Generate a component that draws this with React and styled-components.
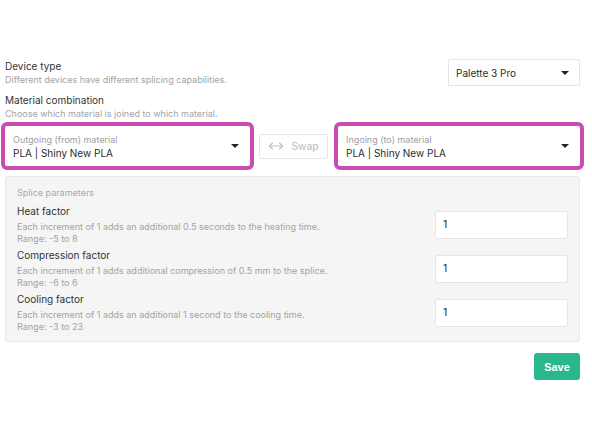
import React from "react";
import styled, { createGlobalStyle } from "styled-components";

const GlobalStyle = createGlobalStyle`
  body {
    margin: 0;
    background: #ffffff;
    font-family: Inter, "Liberation Sans", Arial, sans-serif;
    color: #2b2b2b;
  }
  * {
    box-sizing: border-box;
  }
`;

const Page = styled.div`
  width: 592px;
  height: 444px;
  padding: 59px 12px 0 5px;
  display: flex;
  flex-direction: column;
`;

const Row = styled.div`
  display: flex;
  justify-content: space-between;
  align-items: ${(props) => props.$align || "flex-start"};
`;

const Heading = styled.div`
  font-size: 10px;
  line-height: 15px;
  color: #333;
`;

const Hint = styled.div`
  font-size: 9px;
  line-height: 12px;
  color: #a3a3a3;
`;

const Section = styled.div`
  margin-top: ${(props) => props.$top || 0}px;
`;

const Select = styled.div`
  width: ${(props) => props.$width || 132}px;
  height: ${(props) => props.$height || 27}px;
  background: #fff;
  border: 1px solid ${(props) => (props.$highlight ? "#fff" : "#e4e4e4")};
  border-radius: 2px;
  padding: 0 10px 0 7px;
  display: flex;
  align-items: center;
  justify-content: space-between;
  outline: ${(props) => (props.$highlight ? "4px solid #c94db4" : "none")};
`;

const SelectValue = styled.div`
  font-size: 10px;
  color: #2b2b2b;
`;

const FieldText = styled.div`
  display: flex;
  flex-direction: column;
  gap: 2px;
`;

const FieldLabel = styled.div`
  font-size: 9px;
  line-height: 11px;
  color: #a0a0a0;
`;

const Caret = styled.span`
  width: 0;
  height: 0;
  border-left: 4px solid transparent;
  border-right: 4px solid transparent;
  border-top: 4px solid #222;
`;

const MaterialRow = styled.div`
  display: flex;
  align-items: center;
  margin-top: 6px;
`;

const SwapButton = styled.div`
  width: 69px;
  height: 25px;
  margin: 0 10px 0 9px;
  border: 1px solid #e6e6e6;
  border-radius: 2px;
  display: flex;
  align-items: center;
  justify-content: center;
  gap: 7px;
  font-size: 10.3px;
  color: #bcbcbc;
`;

const Panel = styled.div`
  margin-top: 10px;
  background: #f5f5f5;
  border: 1px solid #e9e9e9;
  border-radius: 3px;
  padding: 10px 11px 8px 11px;
  display: flex;
  flex-direction: column;
`;

const PanelTitle = styled(Hint)`
  margin-bottom: 5px;
  color: #a8a8a8;
`;

const Param = styled(Row)`
  margin-bottom: 3px;
  &:last-child {
    margin-bottom: 0;
  }
`;

const ParamText = styled.div`
  display: flex;
  flex-direction: column;
`;

const ParamTitle = styled(Heading)`
  margin-bottom: 2px;
`;

const NumberBox = styled.div`
  width: 133px;
  height: 28px;
  background: #fff;
  border: 1px solid #e6e6e6;
  border-radius: 2px;
  padding-left: 7px;
  display: flex;
  align-items: center;
  font-size: 10.5px;
  color: #2b2b2b;
`;

const Footer = styled.div`
  display: flex;
  justify-content: flex-end;
  margin-top: 11px;
`;

const SaveButton = styled.div`
  width: 46px;
  height: 27px;
  background: #29b78e;
  border-radius: 3px;
  color: #fff;
  font-family: "Liberation Sans", Arial, sans-serif;
  font-weight: 700;
  font-size: 11px;
  display: flex;
  align-items: center;
  justify-content: center;
`;

const SwapIcon = () => (
  <svg width="16" height="10" viewBox="0 0 16 10" fill="none" stroke="#bdbdbd" strokeWidth="1.1" strokeLinecap="round" strokeLinejoin="round">
    <path d="M1.5 5h13" />
    <path d="M4.5 2L1.5 5l3 3" />
    <path d="M11.5 2l3 3-3 3" />
  </svg>
);

const params = [
  {
    title: "Heat factor",
    desc: "Each increment of 1 adds an additional 0.5 seconds to the heating time.",
    range: "Range: -5 to 8",
  },
  {
    title: "Compression factor",
    desc: "Each increment of 1 adds additional compression of 0.5 mm to the splice.",
    range: "Range: -6 to 6",
  },
  {
    title: "Cooling factor",
    desc: "Each increment of 1 adds an additional 1 second to the cooling time.",
    range: "Range: -3 to 23",
  },
];

const MaterialField = ({ label, width }) => (
  <Select $highlight $width={width} $height={40}>
    <FieldText>
      <FieldLabel>{label}</FieldLabel>
      <SelectValue>PLA | Shiny New PLA</SelectValue>
    </FieldText>
    <Caret />
  </Select>
);

const App = () => (
  <Page>
    <GlobalStyle />
    <Row>
      <div>
        <Heading>Device type</Heading>
        <Hint>Different devices have different splicing capabilities.</Hint>
      </div>
      <Select>
        <SelectValue>Palette 3 Pro</SelectValue>
        <Caret />
      </Select>
    </Row>
    <Section $top={7}>
      <Heading>Material combination</Heading>
      <Hint>Choose which material is joined to which material.</Hint>
    </Section>
    <MaterialRow>
      <MaterialField label="Outgoing (from) material" width={245} />
      <SwapButton>
        <SwapIcon />
        Swap
      </SwapButton>
      <MaterialField label="Ingoing (to) material" width={242} />
    </MaterialRow>
    <Panel>
      <PanelTitle>Splice parameters</PanelTitle>
      {params.map((p) => (
        <Param key={p.title} $align="center">
          <ParamText>
            <ParamTitle>{p.title}</ParamTitle>
            <Hint>{p.desc}</Hint>
            <Hint>{p.range}</Hint>
          </ParamText>
          <NumberBox>1</NumberBox>
        </Param>
      ))}
    </Panel>
    <Footer>
      <SaveButton>Save</SaveButton>
    </Footer>
  </Page>
);

export default App;
